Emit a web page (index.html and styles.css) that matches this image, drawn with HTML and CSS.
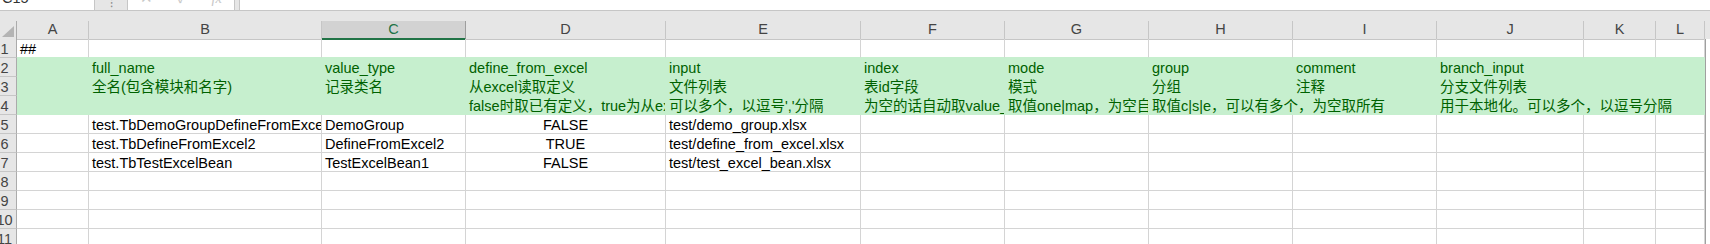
FILE: index.html
```html
<!doctype html>
<html lang="zh-CN">
<head>
	<meta charset="UTF-8">
	<title>__tables__.xlsx</title>
	<link rel="stylesheet" href="styles.css">
</head>
<body>
	<div class="bar">
		<div class="namebox"><span>C15</span></div>
		<div class="grip">⁝</div>
		<div class="fxbox"><span>✕</span><span>✓</span><span class="fx">fx</span></div>
		<div class="spacer"></div>
		<div class="formula"></div>
	</div>
	<div class="gap"></div>

	<div class="colhead">
		<div class="ch corner"><svg width="12" height="11" viewBox="0 0 12 11"><polygon points="12,0 12,11 0,11" fill="#b4b4b4"/></svg></div>
		<div class="ch">A</div>
		<div class="ch">B</div>
		<div class="ch on">C</div>
		<div class="ch">D</div>
		<div class="ch">E</div>
		<div class="ch">F</div>
		<div class="ch">G</div>
		<div class="ch">H</div>
		<div class="ch">I</div>
		<div class="ch">J</div>
		<div class="ch">K</div>
		<div class="ch">L</div>
		<div class="ch end"></div>
	</div>

	<div class="row pre">
		<div class="rh"><span>1</span></div>
		<div class="c">##</div><div class="c"></div><div class="c"></div><div class="c"></div><div class="c"></div><div class="c"></div>
		<div class="c"></div><div class="c"></div><div class="c"></div><div class="c"></div><div class="c"></div><div class="c"></div>
		<div class="edge"></div>
	</div>
	<div class="row fill">
		<div class="rh"><span>2</span></div>
		<div class="c"></div>
		<div class="c">full_name</div>
		<div class="c">value_type</div>
		<div class="c">define_from_excel</div>
		<div class="c">input</div>
		<div class="c">index</div>
		<div class="c">mode</div>
		<div class="c">group</div>
		<div class="c">comment</div>
		<div class="c">branch_input</div>
		<div class="c"></div><div class="c"></div>
		<div class="edge"></div>
	</div>
	<div class="row fill">
		<div class="rh"><span>3</span></div>
		<div class="c"></div>
		<div class="c">全名(包含模块和名字)</div>
		<div class="c">记录类名</div>
		<div class="c">从excel读取定义</div>
		<div class="c">文件列表</div>
		<div class="c">表id字段</div>
		<div class="c">模式</div>
		<div class="c">分组</div>
		<div class="c">注释</div>
		<div class="c">分支文件列表</div>
		<div class="c"></div><div class="c"></div>
		<div class="edge"></div>
	</div>
	<div class="row fill">
		<div class="rh"><span>4</span></div>
		<div class="c"></div>
		<div class="c"></div>
		<div class="c"></div>
		<div class="c">false时取已有定义，true为从excel读取定义</div>
		<div class="c">可以多个，以逗号','分隔</div>
		<div class="c">为空的话自动取value_type的第一个字段</div>
		<div class="c">取值one|map，为空自动为one</div>
		<div class="c spill">取值c|s|e，可以有多个，为空取所有</div>
		<div class="c"></div>
		<div class="c spill">用于本地化。可以多个，以逗号分隔</div>
		<div class="c"></div><div class="c"></div>
		<div class="edge"></div>
	</div>
	<div class="row">
		<div class="rh"><span>5</span></div>
		<div class="c"></div>
		<div class="c">test.TbDemoGroupDefineFromExcel</div>
		<div class="c">DemoGroup</div>
		<div class="c mid">FALSE</div>
		<div class="c">test/demo_group.xlsx</div>
		<div class="c"></div><div class="c"></div><div class="c"></div><div class="c"></div><div class="c"></div><div class="c"></div><div class="c"></div>
		<div class="edge"></div>
	</div>
	<div class="row">
		<div class="rh"><span>6</span></div>
		<div class="c"></div>
		<div class="c">test.TbDefineFromExcel2</div>
		<div class="c">DefineFromExcel2</div>
		<div class="c mid">TRUE</div>
		<div class="c spill">test/define_from_excel.xlsx</div>
		<div class="c"></div><div class="c"></div><div class="c"></div><div class="c"></div><div class="c"></div><div class="c"></div><div class="c"></div>
		<div class="edge"></div>
	</div>
	<div class="row">
		<div class="rh"><span>7</span></div>
		<div class="c"></div>
		<div class="c">test.TbTestExcelBean</div>
		<div class="c">TestExcelBean1</div>
		<div class="c mid">FALSE</div>
		<div class="c spill">test/test_excel_bean.xlsx</div>
		<div class="c"></div><div class="c"></div><div class="c"></div><div class="c"></div><div class="c"></div><div class="c"></div><div class="c"></div>
		<div class="edge"></div>
	</div>
	<div class="row">
		<div class="rh"><span>8</span></div>
		<div class="c"></div><div class="c"></div><div class="c"></div><div class="c"></div><div class="c"></div><div class="c"></div>
		<div class="c"></div><div class="c"></div><div class="c"></div><div class="c"></div><div class="c"></div><div class="c"></div>
		<div class="edge"></div>
	</div>
	<div class="row">
		<div class="rh"><span>9</span></div>
		<div class="c"></div><div class="c"></div><div class="c"></div><div class="c"></div><div class="c"></div><div class="c"></div>
		<div class="c"></div><div class="c"></div><div class="c"></div><div class="c"></div><div class="c"></div><div class="c"></div>
		<div class="edge"></div>
	</div>
	<div class="row">
		<div class="rh"><span>10</span></div>
		<div class="c"></div><div class="c"></div><div class="c"></div><div class="c"></div><div class="c"></div><div class="c"></div>
		<div class="c"></div><div class="c"></div><div class="c"></div><div class="c"></div><div class="c"></div><div class="c"></div>
		<div class="edge"></div>
	</div>
	<div class="row">
		<div class="rh"><span>11</span></div>
		<div class="c"></div><div class="c"></div><div class="c"></div><div class="c"></div><div class="c"></div><div class="c"></div>
		<div class="c"></div><div class="c"></div><div class="c"></div><div class="c"></div><div class="c"></div><div class="c"></div>
		<div class="edge"></div>
	</div>
</body>
</html>
```

FILE: styles.css
```css
html, body {
	margin: 0;
	padding: 0;
}
body {
	width: 1710px;
	height: 244px;
	overflow: hidden;
	background-color: #fff;
	font-family: "Liberation Sans", "Noto Sans CJK SC", sans-serif;
	font-size: 14.5px;
	color: #000;
}

/* formula bar (top edge only) */
.bar {
	display: flex;
	height: 10px;
	border-bottom: 1px solid #c6c6c6;
	background-color: #e6e6e6;
}
.namebox {
	width: 92px;
	padding-left: 2px;
	border-right: 1px solid #c6c6c6;
	display: flex;
	align-items: flex-end;
	overflow: hidden;
	background-color: #fff;
	color: #333;
}
.namebox span {
	line-height: 16px;
	margin-bottom: 4px;
}
.grip {
	width: 32px;
	text-align: center;
	font-size: 12px;
	line-height: 6px;
	color: #8a8a8a;
	overflow: hidden;
}
.fxbox {
	width: 106px;
	border-left: 1px solid #c6c6c6;
	border-right: 1px solid #c6c6c6;
	display: flex;
	align-items: flex-end;
	justify-content: space-around;
	overflow: hidden;
	background-color: #fff;
	color: #c8c8c8;
}
.fxbox span {
	line-height: 16px;
	margin-bottom: 4px;
}
.fxbox .fx {
	font-family: "Liberation Serif", serif;
	font-style: italic;
}
.spacer {
	width: 4px;
}
.formula {
	flex: 1;
	border-left: 1px solid #c6c6c6;
	background-color: #fff;
}
.gap {
	height: 10px;
	background-color: #e6e6e6;
}

/* column letters */
.colhead, .row {
	display: grid;
	grid-template-columns: 17px 72px 233px 144px 200px 195px 144px 144px 144px 144px 147px 72px 49px 5px;
}
.colhead {
	height: 18px;
	background-color: #e6e6e6;
}
.ch {
	box-sizing: border-box;
	border-right: 1px solid #c6c6c6;
	border-bottom: 1px solid #c6c6c6;
	text-align: center;
	line-height: 17px;
	color: #444;
}
.ch.corner {
	display: flex;
	align-items: flex-end;
	justify-content: center;
	padding-bottom: 2px;
	border-right-color: #ababab;
}
.ch.on {
	border-right-color: #9e9e9e;
	border-bottom: 2px solid #217346;
	background-color: #d2d2d2;
	color: #217346;
}
.ch.end {
	border-right: none;
}

/* sheet rows */
.row {
	height: 19px;
}
.rh {
	box-sizing: border-box;
	display: flex;
	padding-top: 3px;
	border-right: 1px solid #ababab;
	border-bottom: 1px solid #c6c6c6;
	overflow: hidden;
	line-height: 14px;
	color: #444;
	background-color: #e6e6e6;
}
.rh span {
	width: 9px;
	flex-shrink: 0;
	display: flex;
	justify-content: center;
	white-space: nowrap;
}
.c {
	box-sizing: border-box;
	padding: 3px 3px 0;
	border-right: 1px solid #d4d4d4;
	border-bottom: 1px solid #d4d4d4;
	line-height: 14px;
	white-space: nowrap;
	overflow-x: clip;
	overflow-y: visible;
}
.c.mid {
	text-align: center;
}
.c.spill {
	overflow-x: visible;
}
.row.pre .c {
	border-bottom-color: #c6efce;
}
.row.fill {
	color: #006100;
	background-color: #c6efce;
}
.row.fill .c {
	border-color: transparent;
}
.edge {
	border-left: 1px solid #a0a0a0;
	background-color: #fff;
}
```
